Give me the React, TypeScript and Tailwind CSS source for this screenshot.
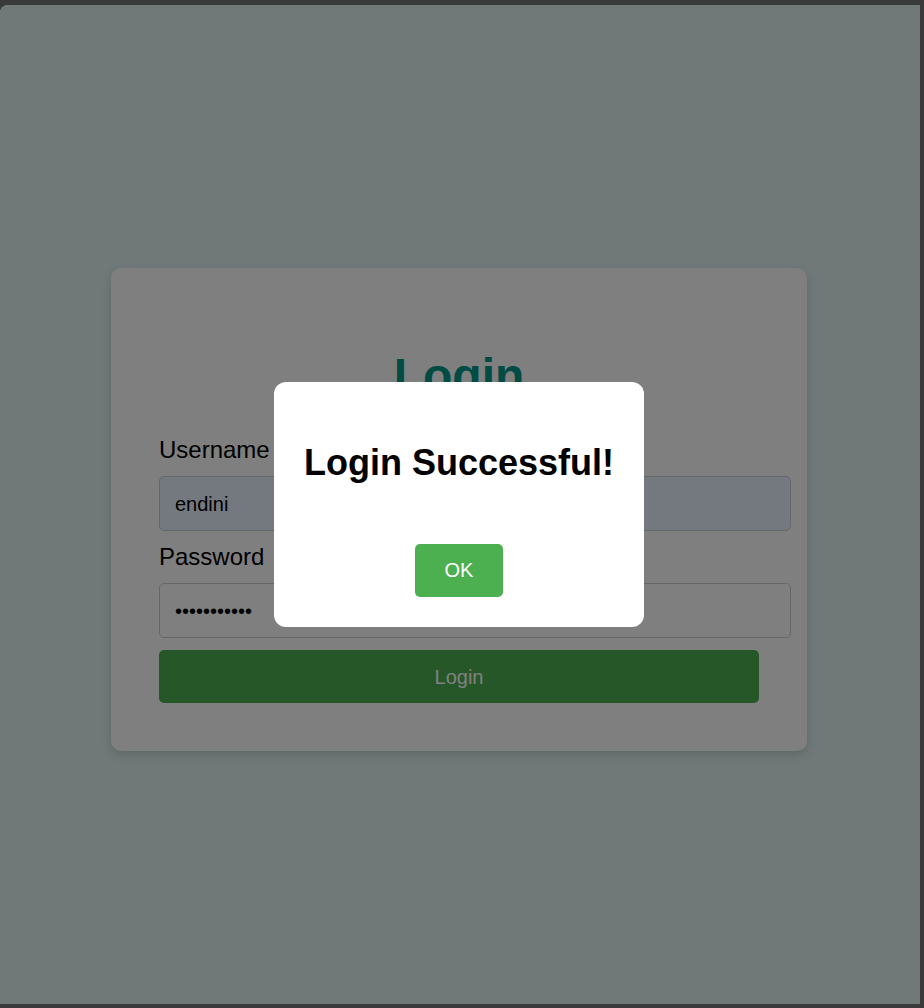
import React from 'react'

export default function App() {
  return (
    <div className="w-[924px] h-[1008px] bg-[#3a3a3a] pt-[5px] font-['Liberation_Sans',Arial,sans-serif]">
      <div className="relative w-[920px] h-[999px] rounded-tl-[8px] overflow-hidden bg-[#e0f2f1] flex items-center justify-center pt-[10px] pr-[2px]">
        {/* Login card */}
        <div className="w-[696px] bg-white rounded-[10px] shadow-[0_4px_10px_rgba(0,0,0,0.15)] px-12 pt-12 pb-12 flex flex-col">
          <h1 className="text-[48px] font-bold text-[#009688] text-center leading-[55px] mt-8 mb-8">Login</h1>
          <label className="block text-[24px] leading-[30px] text-black mb-[11px]">Username</label>
          <input
            type="text"
            defaultValue="endini"
            readOnly
            className="box-content w-[600px] h-[23px] px-[15px] py-[15px] text-[20px] text-black bg-[#e8f0fe] border border-[#cccccc] rounded-[5px] mb-[12px] outline-none"
          />
          <label className="block text-[24px] leading-[28px] text-black mb-[12px]">Password</label>
          <input
            type="password"
            defaultValue="endini12345"
            readOnly
            className="box-content w-[600px] h-[23px] px-[15px] py-[15px] text-[20px] text-black bg-white border border-[#cccccc] rounded-[5px] mb-[12px] outline-none"
          />
          <button className="w-[600px] h-[53px] bg-[#4caf50] text-white text-[20px] rounded-[5px]">Login</button>
        </div>

        {/* Modal overlay */}
        <div className="absolute inset-0 bg-black/50 flex items-center justify-center pr-[2px] pb-[1px]">
          <div className="w-[370px] bg-white rounded-[12px] p-[30px] flex flex-col items-center">
            <h2 className="text-[36px] font-bold text-black leading-[41px] mt-[30px] mb-[30px] whitespace-nowrap">Login Successful!</h2>
            <button className="bg-[#4caf50] text-white text-[20px] leading-[23px] px-[30px] py-[15px] rounded-[5px] mt-[31px]">OK</button>
          </div>
        </div>
      </div>
    </div>
  )
}
